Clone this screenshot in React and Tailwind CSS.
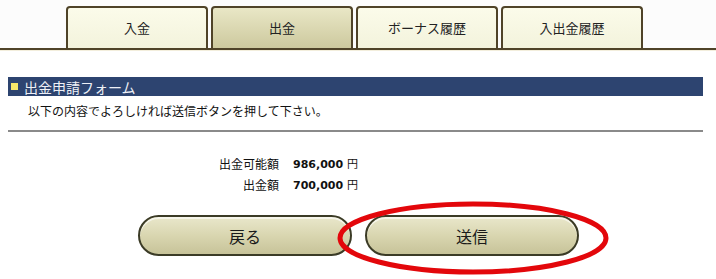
import React from "react";

const jp = { fontFamily: '"Noto Sans CJK JP", "Noto Sans", sans-serif' };

function Tab({ label, active }) {
  return (
    <div
      className={
        "w-[142px] h-[42px] flex items-center justify-center rounded-t-[4px] border-2 border-b-0 border-[#4f4328] text-[13px] text-[#222] " +
        (active
          ? "bg-gradient-to-b from-[#e9e7c6] to-[#cdc99e]"
          : "bg-gradient-to-b from-[#fbfbea] to-[#f3f3dc]")
      }
      style={jp}
    >
      {label}
    </div>
  );
}

function Btn({ label }) {
  return (
    <div
      className="w-[214px] h-[41px] rounded-full border-2 border-[#3b3b26] bg-gradient-to-b from-[#e9e7cb] via-[#d9d6b0] to-[#c7c399] flex items-center justify-center text-[16px] text-[#1a1a1a] shadow-[inset_0_2px_0_rgba(255,255,255,0.6)]"
      style={jp}
    >
      {label}
    </div>
  );
}

export default function App() {
  return (
    <div className="w-[716px] h-[279px] bg-white overflow-hidden relative" style={jp}>
      <div className="h-[50px] flex items-end gap-[3px] pl-[66px] border-b-2 border-[#4f4328] bg-[#fcfcfc]">
        <Tab label="入金" />
        <Tab label="出金" active />
        <Tab label="ボーナス履歴" />
        <Tab label="入出金履歴" />
      </div>
      <div className="h-[1px] bg-[#f3eedc]" />
      <div className="ml-[8px] w-[695px] mt-[26px] h-[19px] bg-[#2d4470] flex items-center gap-[6px] pl-[3px]">
        <div className="w-[7px] h-[7px] bg-[#f6e76a]" />
        <span className="text-[14px] text-[#eef0f6] leading-none">出金申請フォーム</span>
      </div>
      <div className="pl-[28px] pt-[7px] text-[12px] text-[#111] leading-[16px]">
        以下の内容でよろしければ送信ボタンを押して下さい。
      </div>
      <div className="ml-[8px] w-[695px] mt-[11px] h-[2px] bg-[#8a8a8a]" />
      <div className="mt-[24px] flex flex-col gap-[5px] text-[12px] text-[#111]">
        <div className="flex h-[16px] items-center">
          <div className="w-[279px] text-right">出金可能額</div>
          <div className="pl-[14px] font-bold" style={{ fontFamily: '"DejaVu Sans", sans-serif', fontSize: "11px" }}>
            986,000 <span className="font-normal" style={jp}>円</span>
          </div>
        </div>
        <div className="flex h-[16px] items-center">
          <div className="w-[279px] text-right">出金額</div>
          <div className="pl-[14px] font-bold" style={{ fontFamily: '"DejaVu Sans", sans-serif', fontSize: "11px" }}>
            700,000 <span className="font-normal" style={jp}>円</span>
          </div>
        </div>
      </div>
      <div className="mt-[22px] flex gap-[13px] pl-[138px]">
        <Btn label="戻る" />
        <Btn label="送信" />
      </div>
      <svg className="absolute left-[336px] top-[200px]" width="274" height="76" viewBox="0 0 274 76">
        <ellipse cx="137" cy="38" rx="133" ry="34" fill="none" stroke="#e3070b" strokeWidth="5" />
      </svg>
    </div>
  );
}
